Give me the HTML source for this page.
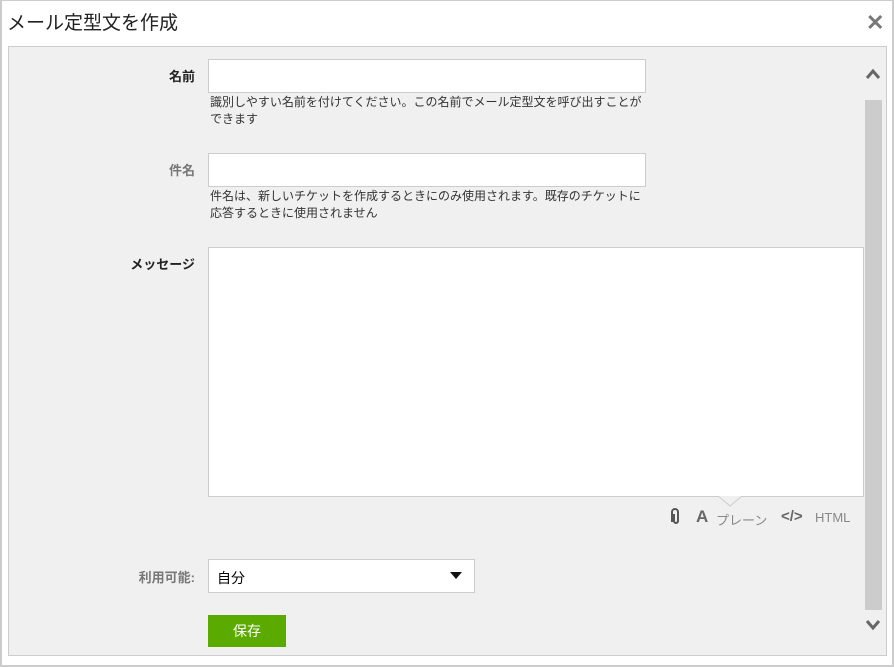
<!DOCTYPE html>
<html><head><meta charset="utf-8"><style>
*{box-sizing:border-box;margin:0;padding:0}
body{width:894px;height:667px;background:#fff;font-family:"Liberation Sans","Noto Sans CJK JP",sans-serif;position:relative;overflow:hidden}
.outer{position:absolute;left:0;top:0;width:894px;height:667px;border:2px solid #ccc;border-top:1px solid #ccc}
.title{position:absolute;left:7px;top:8px;font-size:19px;color:#222}
.close{position:absolute;left:866px;top:10px;font-size:22px;font-weight:bold;color:#777}
.panel{position:absolute;left:8px;top:46px;width:879px;height:610px;background:#f0f0f0;border:1px solid #ccc}
.a{position:absolute}
.lbl{font-size:13px;font-weight:bold;text-align:right;width:110px}
.inp{background:#fff;border:1px solid #ccc}
.help{font-size:12px;color:#333;line-height:17px;width:440px}
</style></head><body>
<div class="outer"></div>
<div class="title">メール定型文を作成</div>
<div class="close">✕</div>
<div class="panel"></div>
<div class="a lbl" style="left:85px;top:66px;color:#222">名前</div>
<div class="a inp" style="left:208px;top:59px;width:438px;height:34px"></div>
<div class="a help" style="left:210px;top:94px">識別しやすい名前を付けてください。この名前でメール定型文を呼び出すことができます</div>
<div class="a lbl" style="left:85px;top:160px;color:#777">件名</div>
<div class="a inp" style="left:208px;top:153px;width:438px;height:34px"></div>
<div class="a help" style="left:210px;top:188px">件名は、新しいチケットを作成するときにのみ使用されます。既存のチケットに応答するときに使用されません</div>
<div class="a lbl" style="left:85px;top:254px;color:#222">メッセージ</div>
<div class="a inp" style="left:208px;top:247px;width:656px;height:250px"></div>
<svg class="a" style="left:718px;top:495px" width="24" height="12"><path d="M0 1 L12 11 L24 1" fill="#f0f0f0" stroke="#ccc"/></svg>
<svg class="a" style="left:669px;top:508px" width="12" height="18"><path d="M3 14 V4 a3 3 0 0 1 6 0 V13 a2 2 0 0 1 -4 0 V6" fill="none" stroke="#555" stroke-width="2"/></svg>
<div class="a" style="left:696px;top:507px;font-size:17px;font-weight:bold;color:#666">A</div>
<div class="a" style="left:716px;top:510px;font-size:13px;color:#888">プレーン</div>
<div class="a" style="left:781px;top:508px;font-size:15px;font-weight:bold;color:#666">&lt;/&gt;</div>
<div class="a" style="left:815px;top:510px;font-size:13px;color:#888">HTML</div>
<div class="a lbl" style="left:85px;top:567px;color:#777">利用可能:</div>
<div class="a inp" style="left:208px;top:559px;width:267px;height:34px;font-size:14px;padding:8px 8px">自分</div>
<svg class="a" style="left:450px;top:572px" width="12" height="7"><path d="M0 0H12L6 7Z" fill="#111"/></svg>
<div class="a" style="left:208px;top:615px;width:78px;height:32px;background:#5aaa00;color:#fff;font-size:14px;text-align:center;line-height:32px">保存</div>
<svg class="a" style="left:865px;top:68px" width="16" height="12"><path d="M2 10 L8 3 L14 10" fill="none" stroke="#666" stroke-width="3"/></svg>
<div class="a" style="left:865px;top:100px;width:17px;height:510px;background:#ccc"></div>
<svg class="a" style="left:865px;top:619px" width="16" height="12"><path d="M2 2 L8 9 L14 2" fill="none" stroke="#666" stroke-width="3"/></svg>
</body></html>
